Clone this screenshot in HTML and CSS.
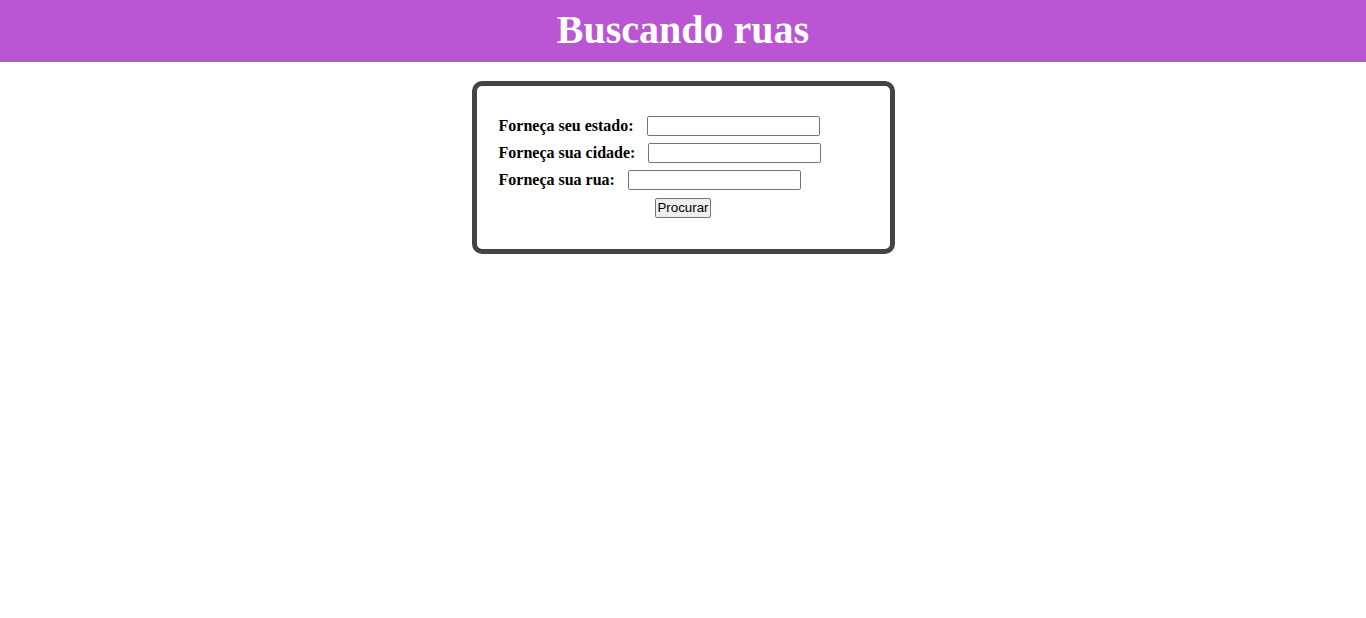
FILE: index.html
```html
<!DOCTYPE html>
<html lang="pt">
<head>
<meta charset="utf-8">
<title>Buscando ruas</title>
<link rel="stylesheet" href="styles.css">
</head>
<body>
<header class="topbar">
  <h1 class="title">Buscando ruas</h1>
</header>
<main class="card">
  <form class="form">
    <div class="row"><label class="label" for="estado">Forneça seu estado:</label><input class="field" id="estado" type="text"></div>
    <div class="row"><label class="label" for="cidade">Forneça sua cidade:</label><input class="field" id="cidade" type="text"></div>
    <div class="row"><label class="label" for="rua">Forneça sua rua:</label><input class="field" id="rua" type="text"></div>
    <button class="btn" type="button">Procurar</button>
  </form>
</main>
</body>
</html>
```
FILE: styles.css
```css
html, body {
  margin: 0;
  padding: 0;
  background: #ffffff;
  font-family: "Liberation Serif", "Times New Roman", serif;
}

.topbar {
  background: #ba55d3;
  height: 62px;
  box-sizing: border-box;
  padding-bottom: 3px;
}

.title {
  margin: 0;
  color: #ffffff;
  font-size: 40px;
  font-weight: bold;
  line-height: 59px;
  text-align: center;
}

.card {
  display: block;
  width: 423px;
  box-sizing: border-box;
  margin: 19px auto 0;
  border: 5px solid #444444;
  border-radius: 10px;
  padding: 30px 22px 31px;
}

.form {
  display: flex;
  flex-direction: column;
  gap: 7px;
  margin: 0;
}

.row {
  display: flex;
  align-items: center;
  height: 20px;
}

.label {
  font-size: 16px;
  font-weight: bold;
  color: #000000;
  line-height: 20px;
}

.field {
  margin: 0 0 0 13px;
  width: 173px;
  height: 20px;
  box-sizing: border-box;
  border: 1px solid #767676;
  border-radius: 2px;
  padding: 1px 2px;
  font-family: "Liberation Sans", Arial, sans-serif;
  font-size: 13.33px;
  background: #ffffff;
}

.btn {
  align-self: center;
  margin-top: 1px;
  height: 20px;
  box-sizing: border-box;
  padding: 0 1px;
  border: 1px solid #767676;
  border-radius: 2px;
  background: #efefef;
  color: #000000;
  font-family: "Liberation Sans", Arial, sans-serif;
  font-size: 13.33px;
  line-height: 16px;
}
```
